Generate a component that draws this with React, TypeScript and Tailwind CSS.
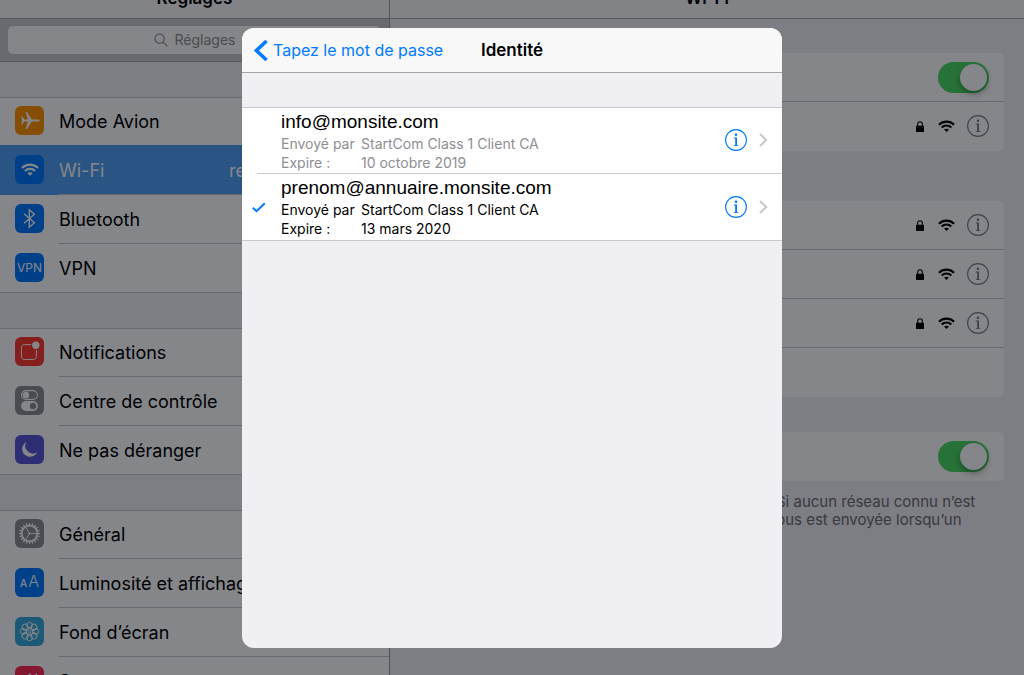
import { type ReactNode } from 'react'

interface SettingsItem {
  label: string
  color: string
  icon: ReactNode
  value?: string
  selected?: boolean
}

interface Identity {
  email: string
  issuer: string
  expires: string
  selected: boolean
}

function WifiGlyph({ className }: { className: string }) {
  return (
    <svg viewBox="0 0 18 13" className={className} fill="none" stroke="currentColor" strokeWidth="2.2">
      <path d="M1 5 C5.4 0.6 12.6 0.6 17 5" />
      <path d="M3.9 8 C6.7 5.2 11.3 5.2 14.1 8" />
      <path d="M6.4 10.2 C7.9 8.9 10.1 8.9 11.6 10.2 L9 12.8 Z" fill="currentColor" stroke="none" />
    </svg>
  )
}

function LockGlyph() {
  return (
    <svg viewBox="0 0 8 11" className="w-2 h-[11px]" fill="none">
      <path d="M1.7 5 V3 C1.7 -0.1 6.3 -0.1 6.3 3 V5" stroke="currentColor" strokeWidth="1.1" />
      <rect x="0" y="4.7" width="8" height="6.3" rx="0.5" fill="currentColor" />
    </svg>
  )
}

function InfoGlyph() {
  return (
    <svg viewBox="0 0 22 22" className="w-[22px] h-[22px]" fill="none">
      <circle cx="11" cy="11" r="10.4" stroke="currentColor" strokeWidth="1.1" />
      <circle cx="11" cy="5.8" r="1.3" fill="currentColor" />
      <path d="M8.8 8.4 H12 V16.2 H13.3 V17.1 H8.8 V16.2 H10.2 V9.4 H8.8 Z" fill="currentColor" />
    </svg>
  )
}

const gearTeeth = Array.from({ length: 20 }, (_, i) => i * 18)
const petals = Array.from({ length: 8 }, (_, i) => i * 45)

const planeIcon = (
  <svg viewBox="0 0 29 29" fill="currentColor">
    <path d="M24.6 14.5 C24.6 15.3 23.6 15.6 22.4 15.6 H16.8 L12 23 H10.6 L12.9 15.6 H9.2 L7.5 18.2 H6.3 L7 14.5 L6.3 10.8 H7.5 L9.2 13.4 H12.9 L10.6 6 H12 L16.8 13.4 H22.4 C23.6 13.4 24.6 13.7 24.6 14.5 Z" />
  </svg>
)

const bluetoothIcon = (
  <svg viewBox="0 0 29 29" fill="none" stroke="currentColor" strokeWidth="1.4">
    <path d="M9 9.7 L19.4 18.7 L14.3 23.2 V5.8 L19.4 10.3 L9 19.3" />
  </svg>
)

const notificationsIcon = (
  <svg viewBox="0 0 29 29" fill="none">
    <path d="M16.2 7.6 H9.5 C7.7 7.6 6.5 8.8 6.5 10.6 V19.5 C6.5 21.3 7.7 22.5 9.5 22.5 H18.4 C20.2 22.5 21.4 21.3 21.4 19.5 V12.8" stroke="currentColor" strokeWidth="1" />
    <circle cx="20.8" cy="8.2" r="3.7" fill="currentColor" />
  </svg>
)

const controlCenterIcon = (
  <svg viewBox="0 0 29 29" fill="none">
    <rect x="6.6" y="4.6" width="15.8" height="8.8" rx="4.4" stroke="currentColor" strokeWidth="1.1" />
    <circle cx="11" cy="9" r="3.2" fill="currentColor" />
    <rect x="6" y="15" width="17" height="10" rx="5" fill="currentColor" />
    <circle cx="18" cy="20" r="3.2" fill="#8e8e93" />
  </svg>
)

const moonIcon = (
  <svg viewBox="0 0 29 29" fill="currentColor">
    <path d="M11.4 7 A7.8 7.8 0 1 0 22 17.3 A7.6 7.6 0 0 1 11.4 7 Z" />
  </svg>
)

const gearIcon = (
  <svg viewBox="0 0 29 29" fill="none" stroke="currentColor">
    <circle cx="14.5" cy="14.5" r="7.8" strokeWidth="1.8" />
    {gearTeeth.map((angle) => (
      <path key={angle} d="M14.5 6.5 V4" strokeWidth="1.3" transform={`rotate(${angle} 14.5 14.5)`} />
    ))}
    <path d="M14.5 14.5 H21.5 M14.5 14.5 L10.8 8.2 M14.5 14.5 L10.8 20.8" strokeWidth="0.9" />
    <circle cx="14.5" cy="14.5" r="1.1" fill="currentColor" stroke="none" />
  </svg>
)

const flowerIcon = (
  <svg viewBox="0 0 29 29" fill="none" stroke="currentColor" strokeWidth="1">
    {petals.map((angle) => (
      <circle key={angle} cx="14.5" cy="8.2" r="2.9" transform={`rotate(${angle} 14.5 14.5)`} />
    ))}
    <circle cx="14.5" cy="14.5" r="3.4" />
    <circle cx="14.5" cy="14.5" r="1.5" />
  </svg>
)

const speakerIcon = (
  <svg viewBox="0 0 29 29" fill="none" stroke="currentColor" strokeWidth="1.3">
    <path d="M7 12 H10 L15 8 V21 L10 17 H7 Z" fill="currentColor" />
    <path d="M20.5 7.5 C24 11 24 18 20.5 21.5" />
  </svg>
)

const groups: SettingsItem[][] = [
  [
    { label: 'Mode Avion', color: 'bg-[#ff9500]', icon: planeIcon },
    { label: 'Wi-Fi', color: 'bg-[#007aff]', icon: <WifiGlyph className="w-[18px] mx-auto mt-2" />, value: 'reseau', selected: true },
    { label: 'Bluetooth', color: 'bg-[#007aff]', icon: bluetoothIcon },
    { label: 'VPN', color: 'bg-[#007aff]', icon: <span className="block text-center text-xs leading-[29px]">VPN</span> },
  ],
  [
    { label: 'Notifications', color: 'bg-[#ff3b30]', icon: notificationsIcon },
    { label: 'Centre de contrôle', color: 'bg-[#8e8e93]', icon: controlCenterIcon },
    { label: 'Ne pas déranger', color: 'bg-[#5856d6]', icon: moonIcon },
  ],
  [
    { label: 'Général', color: 'bg-[#8e8e93]', icon: gearIcon },
    {
      label: 'Luminosité et affichage',
      color: 'bg-[#007aff]',
      icon: (
        <span className="flex items-baseline justify-center gap-px pt-px leading-[29px]">
          <span className="text-[10px] font-medium">A</span>
          <span className="text-base font-light">A</span>
        </span>
      ),
    },
    { label: 'Fond d’écran', color: 'bg-[#34aadc]', icon: flowerIcon },
    { label: 'Sons', color: 'bg-[#ff2d55]', icon: speakerIcon },
  ],
]

const identities: Identity[] = [
  { email: 'info@monsite.com', issuer: 'StartCom Class 1 Client CA', expires: '10 octobre 2019', selected: false },
  { email: 'prenom@annuaire.monsite.com', issuer: 'StartCom Class 1 Client CA', expires: '13 mars 2020', selected: true },
]

function SettingsRow({ item, last }: { item: SettingsItem; last: boolean }) {
  return (
    <li className={item.selected ? 'relative -mt-px bg-[#4f9ff5] pt-px text-white' : ''}>
      <button className={`flex h-[49px] w-full items-center pl-[15px] text-left ${last ? 'border-b border-[#c8c7cc]' : ''}`}>
        <span className={`mb-0.5 h-[29px] w-[29px] shrink-0 overflow-hidden rounded-md text-white ${item.color}`}>{item.icon}</span>
        <span className={`ml-[15px] flex h-full flex-1 items-center justify-between whitespace-nowrap pt-0.5 text-lg ${last ? '' : 'border-b border-[#c8c7cc]'}`}>
          <span>{item.label}</span>
          {item.value && <span className="w-40">{item.value}</span>}
        </span>
      </button>
    </li>
  )
}

function Sidebar() {
  return (
    <nav className="flex w-[390px] shrink-0 flex-col border-r border-[#a0a0a5]">
      <header className="flex h-[19px] shrink-0 items-end justify-center border-b border-[#a8a8ad] bg-[#f9f9fa] pb-2.5">
        <h1 className="text-[17px] font-semibold leading-5">Réglages</h1>
      </header>
      <div className="shrink-0 border-b border-[#a8a8ad] bg-[#c9c9ce] px-2 py-[7px]">
        <label className="flex h-7 items-center justify-center gap-[7px] rounded-[5px] bg-white text-[#8e8e93]">
          <svg viewBox="0 0 14 14" className="h-3.5 w-3.5" fill="none" stroke="currentColor" strokeWidth="1.1">
            <circle cx="5.6" cy="5.6" r="4.7" />
            <path d="M9 9 L13.3 13.3" />
          </svg>
          <input type="text" aria-label="Rechercher" placeholder="Réglages" className="w-[61px] bg-transparent text-sm outline-none placeholder:text-[#8e8e93]" />
        </label>
      </div>
      {groups.map((items, i) => (
        <ul key={i} className="mt-[35px] shrink-0 bg-white shadow-[inset_0_1px_#c8c7cc]">
          {items.map((item, j) => (
            <SettingsRow key={item.label} item={item} last={i < 2 && j === items.length - 1} />
          ))}
        </ul>
      ))}
    </nav>
  )
}

function Switch({ label }: { label: string }) {
  return (
    <label className="relative flex h-[31px] w-[51px] justify-end rounded-full bg-[#4cd964] p-0.5">
      <input type="checkbox" role="switch" aria-label={label} defaultChecked className="absolute inset-0 cursor-pointer appearance-none" />
      <span className="h-[27px] w-[27px] rounded-full bg-white shadow-[0_3px_6px_rgba(0,0,0,0.35)]" />
    </label>
  )
}

function NetworkRow({ last = false }: { last?: boolean }) {
  return (
    <li className={`flex h-[49px] items-center justify-end pr-[15px] ${last ? 'pb-px' : 'border-b border-[#c8c7cc]'}`}>
      <span className="mr-3.5">
        <LockGlyph />
      </span>
      <WifiGlyph className="mr-3 w-[17px]" />
      <button aria-label="Détails du réseau" className="text-[#7c7c82]">
        <InfoGlyph />
      </button>
    </li>
  )
}

function WifiPane() {
  return (
    <main className="min-w-0 flex-1">
      <header className="flex h-[19px] items-end justify-center border-b border-[#a8a8ad] bg-[#f9f9fa] pb-2.5">
        <h2 className="text-[17px] font-semibold leading-5">Wi-Fi</h2>
      </header>
      <div className="px-5 pt-[34px]">
        <ul className="rounded-[5px] bg-white">
          <li className="flex h-[49px] items-center justify-end border-b border-[#c8c7cc] pr-[15px]">
            <Switch label="Wi-Fi" />
          </li>
          <NetworkRow last />
        </ul>
        <ul className="mt-[50px] rounded-[5px] bg-white">
          <NetworkRow />
          <NetworkRow />
          <NetworkRow />
          <li className="h-[49px]" />
        </ul>
        <div className="mt-[35px] flex h-[49px] items-center justify-end rounded-[5px] bg-white pr-[15px]">
          <Switch label="Confirmer l’accès" />
        </div>
        <p className="ml-auto mt-3 w-[236px] whitespace-nowrap text-[15px] leading-[18px] text-[#6d6d72]">
          <span className="block pl-2">Si aucun réseau connu n’est</span>
          <span className="block">vous est envoyée lorsqu’un</span>
        </p>
      </div>
    </main>
  )
}

function IdentityRow({ identity, last }: { identity: Identity; last: boolean }) {
  return (
    <li className={`flex ${last ? 'border-b border-[#c8c7cc]' : ''}`}>
      <span className="flex w-[15px] shrink-0 items-center pl-2.5 text-[#007aff]">
        {identity.selected && (
          <svg viewBox="0 0 14 11" className="h-[11px] w-3.5 shrink-0" fill="none" stroke="currentColor" strokeWidth="2">
            <path d="M0.8 5.8 L4.6 9.2 L12.8 1.2" />
          </svg>
        )}
      </span>
      <div className={`flex flex-1 items-center pl-6 pr-3.5 ${last ? '' : 'border-b border-[#c8c7cc] pb-px'}`}>
        <div className={`flex-1 pt-0.5 ${last ? 'pb-0.5' : ''}`}>
          <div className="font-['Liberation_Sans',sans-serif] text-[19px] leading-6">{identity.email}</div>
          <dl className={`grid grid-cols-[80px_1fr] text-sm leading-[19px] ${identity.selected ? '' : 'text-[#8e8e93]'}`}>
            <dt>Envoyé par</dt>
            <dd>{identity.issuer}</dd>
            <dt>Expire :</dt>
            <dd>{identity.expires}</dd>
          </dl>
        </div>
        <button aria-label={`Détails de ${identity.email}`} className="mr-3 text-[#007aff]">
          <InfoGlyph />
        </button>
        <svg viewBox="0 0 9 14" className="h-3.5 w-[9px]" fill="none" stroke="#c7c7cc" strokeWidth="2">
          <path d="M1 1 L7.2 7 L1 13" />
        </svg>
      </div>
    </li>
  )
}

function IdentityDialog() {
  return (
    <section role="dialog" aria-labelledby="dialog-title" className="h-[620px] w-[540px] overflow-hidden rounded-xl bg-[#efeff4]">
      <header className="grid h-[45px] grid-cols-[1fr_auto_1fr] items-center border-b border-[#a7a7aa] bg-[#f8f8f9] pt-0.5 text-[17px]">
        <button className="flex items-center gap-[5px] whitespace-nowrap pb-0.5 pl-3 text-base text-[#007aff]">
          <svg viewBox="0 0 14 21" className="h-[21px] w-3.5" fill="none" stroke="currentColor" strokeWidth="3.5">
            <path d="M12.6 1 L2.4 10.5 L12.6 20" />
          </svg>
          Tapez le mot de passe
        </button>
        <h2 id="dialog-title" className="font-semibold">Identité</h2>
      </header>
      <ul className="mt-[34px] border-t border-[#c8c7cc] bg-white">
        {identities.map((identity, i) => (
          <IdentityRow key={identity.email} identity={identity} last={i === identities.length - 1} />
        ))}
      </ul>
    </section>
  )
}

export default function App() {
  return (
    <div className="relative flex h-screen overflow-hidden bg-[#efeff4] font-['Inter',sans-serif] text-black">
      <Sidebar />
      <WifiPane />
      <div className="absolute inset-0 flex items-start justify-center bg-[#010309]/48 pt-7">
        <IdentityDialog />
      </div>
    </div>
  )
}
